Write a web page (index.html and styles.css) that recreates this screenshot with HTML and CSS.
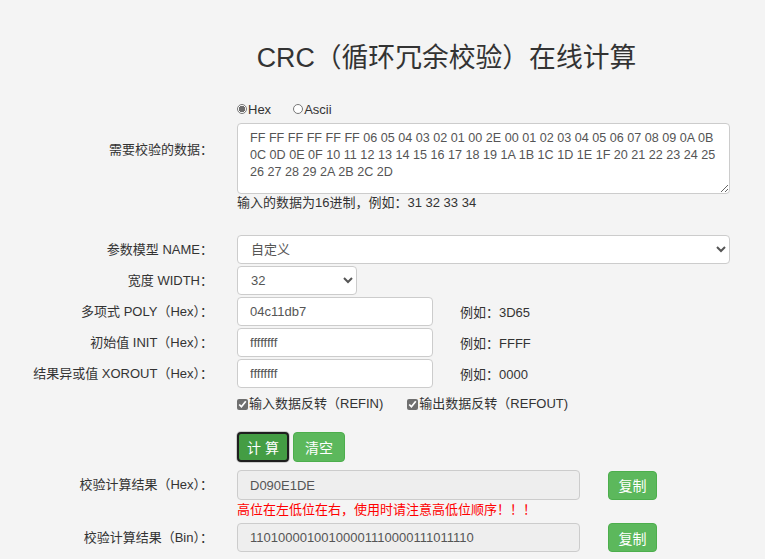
FILE: index.html
```html
<!DOCTYPE html>
<html lang="zh-CN">

<head>
    <meta charset="UTF-8">
    <meta name="viewport" content="width=device-width, initial-scale=1.0">
    <title>CRC（循环冗余校验）在线计算</title>
    <link rel="stylesheet" href="styles.css">
</head>

<body>
    <h1 class="title">CRC（循环冗余校验）在线计算</h1>

    <form class="crc-form" onsubmit="return false">
        <div class="row row-data">
            <label class="label label-data">需要校验的数据：</label>
            <div class="field">
                <div class="radios">
                    <label class="radio"><input type="radio" name="fmt" checked>Hex</label>
                    <label class="radio"><input type="radio" name="fmt">Ascii</label>
                </div>
                <textarea class="data">FF FF FF FF FF FF 06 05 04 03 02 01 00 2E 00 01 02 03 04 05 06 07 08 09 0A 0B 0C 0D 0E 0F 10 11 12 13 14 15 16 17 18 19 1A 1B 1C 1D 1E 1F 20 21 22 23 24 25 26 27 28 29 2A 2B 2C 2D</textarea>
                <div class="hint">输入的数据为16进制，例如：31 32 33 34</div>
            </div>
        </div>

        <div class="row row-name">
            <label class="label">参数模型 NAME：</label>
            <div class="field">
                <select class="control select-name">
                    <option>自定义</option>
                </select>
            </div>
        </div>

        <div class="row">
            <label class="label">宽度 WIDTH：</label>
            <div class="field">
                <select class="control select-width">
                    <option>32</option>
                </select>
            </div>
        </div>

        <div class="row">
            <label class="label">多项式 POLY（Hex）：</label>
            <div class="field">
                <input class="control param" type="text" value="04c11db7">
                <span class="example">例如：3D65</span>
            </div>
        </div>

        <div class="row">
            <label class="label">初始值 INIT（Hex）：</label>
            <div class="field">
                <input class="control param" type="text" value="ffffffff">
                <span class="example">例如：FFFF</span>
            </div>
        </div>

        <div class="row">
            <label class="label">结果异或值 XOROUT（Hex）：</label>
            <div class="field">
                <input class="control param" type="text" value="ffffffff">
                <span class="example">例如：0000</span>
            </div>
        </div>

        <div class="row row-check">
            <div class="label"></div>
            <div class="field">
                <label class="check check-in"><input type="checkbox" checked>输入数据反转（REFIN)</label>
                <label class="check"><input type="checkbox" checked>输出数据反转（REFOUT)</label>
            </div>
        </div>

        <div class="row row-buttons">
            <div class="label"></div>
            <div class="field">
                <button class="btn btn-calc">计 算</button>
                <button class="btn btn-clear">清空</button>
            </div>
        </div>

        <div class="row row-result">
            <label class="label">校验计算结果（Hex）：</label>
            <div class="field">
                <input class="control result" type="text" value="D090E1DE" readonly>
                <button class="btn btn-copy">复制</button>
            </div>
        </div>
        <div class="row">
            <div class="label"></div>
            <div class="field warn">高位在左低位在右，使用时请注意高低位顺序！！！</div>
        </div>

        <div class="row row-bin">
            <label class="label">校验计算结果（Bin）：</label>
            <div class="field">
                <input class="control result result-bin" type="text" value="11010000100100001110000111011110" readonly>
                <button class="btn btn-copy">复制</button>
            </div>
        </div>
    </form>
</body>

</html>
```

FILE: styles.css
```css
body {
    margin: 0;
    background-color: #f4f4f4;
    color: #333;
    font-family: "Liberation Sans", Arial, "Noto Sans CJK SC", sans-serif;
    font-size: 13px;
}

.title {
    margin: 41px 0 0;
    padding-left: 128px;
    font-size: 26.8px;
    line-height: 34px;
    font-weight: normal;
    text-align: center;
    color: #333;
}

.crc-form {
    margin-top: 24px;
}

.row {
    display: flex;
    align-items: center;
    margin-bottom: 2px;
}

.label {
    width: 213px;
    flex-shrink: 0;
    text-align: right;
    line-height: 18px;
}

.field {
    margin-left: 24px;
    display: flex;
    align-items: center;
}

.row-data {
    align-items: flex-start;
    margin-bottom: 23px;
}

.label-data {
    margin-top: 42px;
}

.row-data .field {
    display: block;
}

.radios {
    display: flex;
    align-items: center;
    height: 20px;
    margin-bottom: 4px;
}

.radio {
    display: flex;
    align-items: center;
    margin-right: 22px;
}

.radio input {
    appearance: none;
    width: 10px;
    height: 10px;
    margin: 0 1px 0 0;
    border: 1px solid #777;
    border-radius: 50%;
    background: #fff;
}

.radio input:checked {
    background: radial-gradient(circle, #6d6d6d 0 3px, #fff 3.5px);
}

.data {
    display: block;
    box-sizing: border-box;
    width: 493px;
    height: 71px;
    margin: 0;
    padding: 6px 6px 6px 12px;
    border: 1px solid #ccc;
    border-radius: 4px;
    background: #fff;
    color: #555;
    font-family: inherit;
    font-size: 12.6px;
    line-height: 17px;
    resize: vertical;
}

.hint {
    line-height: 18px;
}

.control {
    box-sizing: border-box;
    height: 29px;
    margin: 0;
    padding: 0 12px;
    border: 1px solid #ccc;
    border-radius: 4px;
    background-color: #fff;
    color: #555;
    font-family: inherit;
    font-size: 13px;
}

.select-name {
    width: 493px;
    padding-left: 9px;
}

.select-width {
    width: 120px;
    padding-left: 9px;
}

.param {
    width: 196px;
}

.example {
    margin-left: 27px;
}

.row-check {
    margin-top: 6px;
}

.check {
    display: flex;
    align-items: center;
    line-height: 20px;
}

.check input {
    width: 11px;
    height: 11px;
    margin: 0 1px 0 0;
    accent-color: #6f6f6f;
}

.check-in {
    margin-right: 24px;
}

.row-buttons {
    margin-top: 18px;
    margin-bottom: 8px;
}

.btn {
    box-sizing: border-box;
    height: 30px;
    padding: 0;
    border: 1px solid #4cae4c;
    border-radius: 4px;
    background-color: #5cb85c;
    color: #fff;
    font-family: inherit;
    font-size: 14px;
    cursor: pointer;
}

.btn-calc,
.btn-clear {
    width: 52px;
    margin-right: 4px;
}

.btn-calc {
    background-color: #449d44;
    border: 2px solid #1f1f1f;
    box-shadow: 0 0 0 1px #ccc;
}

.btn-copy {
    width: 49px;
    height: 29px;
    margin-left: 28px;
}

.result {
    width: 343px;
    height: 30px;
    background-color: #eee;
}

.result-bin {
    height: 29px;
}

.warn {
    color: #f00;
    line-height: 16px;
    margin-bottom: 3px;
}
```
